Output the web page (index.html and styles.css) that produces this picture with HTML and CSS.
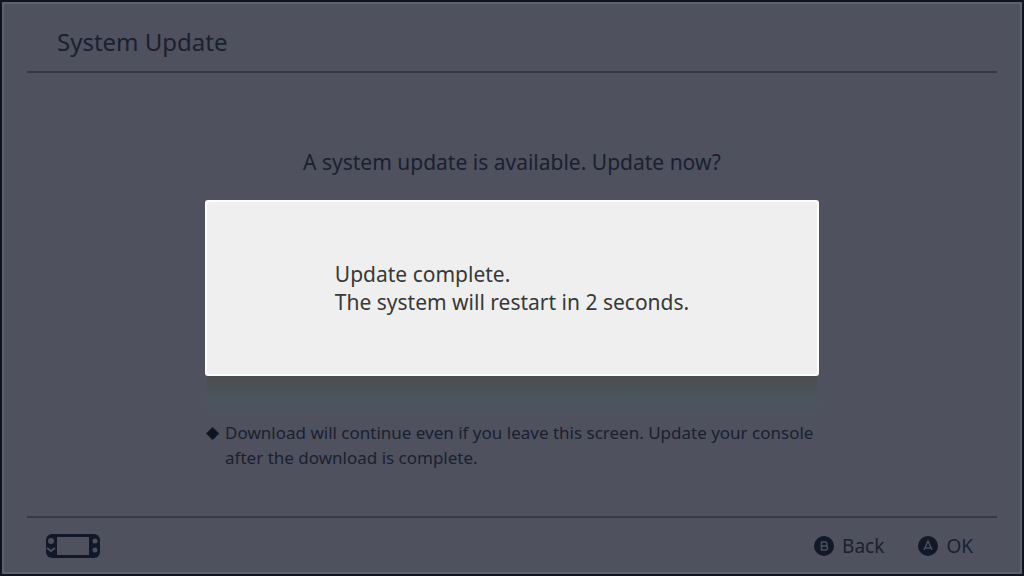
FILE: index.html
```html
<!DOCTYPE html>
<html lang="en">
<head>
    <meta charset="UTF-8">
    <meta name="viewport" content="width=device-width, initial-scale=1.0">
    <title>System Update</title>
    <link rel="stylesheet" href="styles.css">
</head>
<body>
    <div class="screen">
        <header class="top">
            <h1>System Update</h1>
        </header>

        <main class="content">
            <p class="question">A system update is available. Update now?</p>
            <div class="note">
                <span class="bullet">&#9670;</span>
                <p>Download will continue even if you leave this screen. Update your console after the download is complete.</p>
            </div>
        </main>

        <footer class="bottom">
            <svg class="console" width="56" height="26" viewBox="0 0 56 26" aria-hidden="true">
                <path d="M10 2.5h36M10 23.5h36" stroke="#121827" stroke-width="3"/>
                <path d="M12 1H7a6 6 0 0 0-6 6v12a6 6 0 0 0 6 6h5z" fill="#121827"/>
                <path d="M44 1h5a6 6 0 0 1 6 6v12a6 6 0 0 1-6 6h-5z" fill="#121827"/>
                <circle cx="6" cy="8" r="3" fill="#4c505e"/>
                <path d="M2 15l4 3 4-3" fill="none" stroke="#4c505e" stroke-width="2"/>
                <circle cx="50" cy="8" r="2.5" fill="#4c505e"/>
                <circle cx="50" cy="17" r="2.5" fill="#4c505e"/>
            </svg>
            <div class="actions">
                <button type="button">
                    <svg width="20" height="20" viewBox="0 0 20 20" aria-hidden="true">
                        <circle cx="10" cy="10" r="10" fill="#121827"/>
                        <path d="M7.5 6h3.500a2 2 0 0 1 0 4H7.500zM7.500 10h4a2 2 0 0 1 0 4h-4z" fill="none" stroke="#4c505e" stroke-width="1.5"/>
                    </svg>
                    Back
                </button>
                <button type="button">
                    <svg width="20" height="20" viewBox="0 0 20 20" aria-hidden="true">
                        <circle cx="10" cy="10" r="10" fill="#121827"/>
                        <path d="M6 14l4-9 4 9M7 12h6" fill="none" stroke="#4c505e" stroke-width="1.5"/>
                    </svg>
                    OK
                </button>
            </div>
        </footer>
    </div>

    <div class="overlay">
        <div class="dialog" role="dialog" aria-label="Update complete">
            <p>Update complete.<br>The system will restart in 2 seconds.</p>
        </div>
    </div>
</body>
</html>
```
FILE: styles.css
```css
* {
    box-sizing: border-box;
}
body {
    margin: 0;
    background: #4f515e;
    color: #1b2030;
    font-family: "Noto Sans", "Open Sans", sans-serif;
}
h1, p {
    margin: 0;
}
.screen {
    display: flex;
    flex-direction: column;
    min-height: 100vh;
    padding: 0 25px;
    border: 2px solid #101322;
    box-shadow: inset 0 0 0 2px #5d606d;
}
.top {
    padding: 25px 30px 14px;
    border-bottom: 2px solid #363946;
}
.top h1 {
    font-size: 24px;
    line-height: 30px;
    font-weight: 400;
}
.content {
    flex: 1;
    display: flex;
    flex-direction: column;
    align-items: center;
    justify-content: space-between;
    padding: 75px 0 46px;
}
.question {
    font-size: 21px;
    line-height: 28px;
}
.note {
    display: flex;
    gap: 6px;
    width: 612px;
    max-width: 100%;
    font-size: 17px;
    line-height: 25px;
}
.bullet {
    font-family: "DejaVu Sans", sans-serif;
    color: #101322;
}
.bottom {
    display: flex;
    align-items: center;
    justify-content: space-between;
    padding: 14px 24px 14px 18px;
    border-top: 2px solid #363946;
}
.actions {
    display: flex;
    gap: 34px;
}
.actions button {
    display: flex;
    align-items: center;
    gap: 8px;
    padding: 0;
    border: 0;
    background: none;
    color: inherit;
    font-family: inherit;
    font-size: 19px;
    line-height: 28px;
}
.overlay {
    position: fixed;
    inset: 0;
    display: flex;
    align-items: center;
    justify-content: center;
}
.dialog {
    position: relative;
    display: flex;
    justify-content: center;
    width: 60%;
    padding: 58px 24px;
    background: #efefef;
    border: 2px solid #fdfdfd;
    border-radius: 3px;
    color: #383838;
    font-size: 21px;
    line-height: 28px;
}
/* shade under the dialog */
.dialog::after {
    content: "";
    position: absolute;
    top: 100%;
    left: 0;
    right: 0;
    height: 40px;
    margin-top: 2px;
    background: linear-gradient(#4b4e50, #4a565e 60%, #4f515e);
}
```
